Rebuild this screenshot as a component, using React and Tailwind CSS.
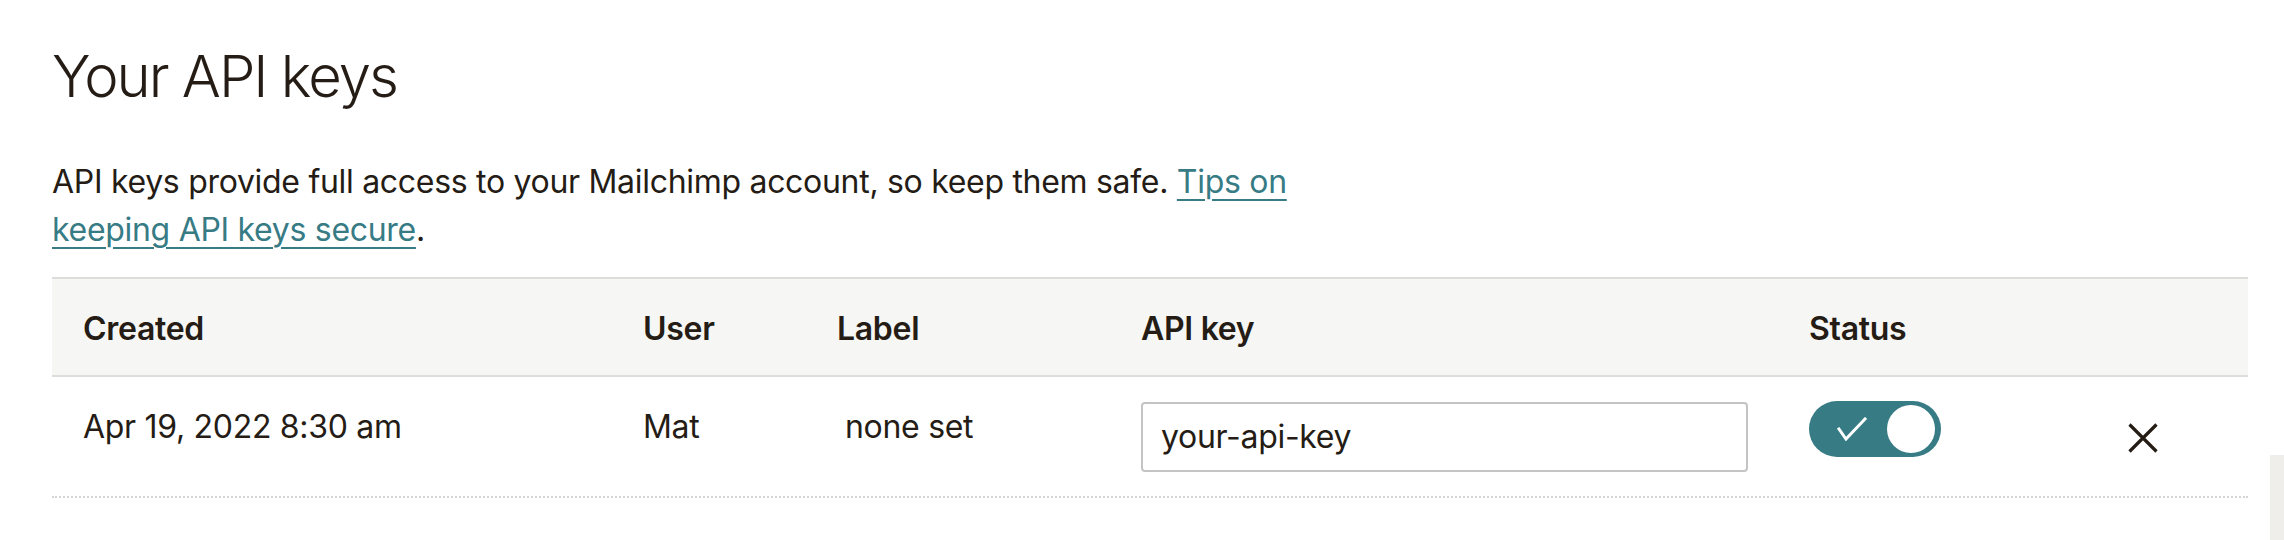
export default function App() {
  const font = { fontFamily: "Inter, 'Noto Sans', sans-serif" };
  return (
    <div className="flex w-[2284px] h-[540px] bg-white text-[#241c15] overflow-hidden" style={font}>
      <div className="flex-1 pl-[52px] pr-[22px] pt-[41px]">
        <h1 className="text-[58px] leading-[70px] font-light tracking-[-2px]">Your API keys</h1>
        <p className="mt-[47px] text-[32px] leading-[48px] max-w-[1250px] tracking-[-0.3px]">
          API keys provide full access to your Mailchimp account, so keep them safe.{" "}
          <a className="text-[#377b85] underline decoration-2 underline-offset-[6px]">Tips on keeping API keys secure</a>.
        </p>
        <div className="mt-[23px]">
          <div className="grid grid-cols-[560px_194px_304px_668px_319px_1fr] pl-[31px] bg-[#f6f6f4] border-y-2 border-[#dedddb] h-[100px] pt-[26px] text-[32px] leading-[48px] font-semibold tracking-[-0.3px]">
            <div>Created</div>
            <div>User</div>
            <div>Label</div>
            <div>API key</div>
            <div>Status</div>
            <div></div>
          </div>
          <div className="grid grid-cols-[560px_194px_304px_668px_319px_1fr] pl-[31px] h-[121px] border-b-2 border-dotted border-[#d4d4d4] text-[32px] leading-[48px] tracking-[-0.3px]">
            <div className="pt-[26px]">Apr 19, 2022 8:30 am</div>
            <div className="pt-[26px]">Mat</div>
            <div className="pt-[26px] pl-[8px]">none set</div>
            <div className="pt-[25px]">
              <div className="w-[607px] h-[70px] border-2 border-[#c4c4c4] rounded-[4px] pl-[18px] flex items-center text-[32px]">
                your-api-key
              </div>
            </div>
            <div className="pt-[24px]">
              <div className="w-[132px] h-[56px] rounded-full bg-[#377b85] flex items-center justify-between pl-[28px] pr-[6px]">
                <svg width="30" height="24" viewBox="0 0 30 24" fill="none">
                  <polyline points="2,12 9,22 28,2" stroke="white" strokeWidth="3" strokeLinecap="square" />
                </svg>
                <div className="w-[48px] h-[48px] rounded-full bg-white"></div>
              </div>
            </div>
            <div className="pt-[46px]">
              <svg width="30" height="30" viewBox="0 0 30 30" fill="none">
                <path d="M1.5 1.5 L28.5 28.5 M28.5 1.5 L1.5 28.5" stroke="#241c15" strokeWidth="3.2" />
              </svg>
            </div>
          </div>
        </div>
      </div>
      <div className="w-[14px] flex flex-col">
        <div className="mt-[455px] flex-1 bg-[#efeeea]"></div>
      </div>
    </div>
  );
}
